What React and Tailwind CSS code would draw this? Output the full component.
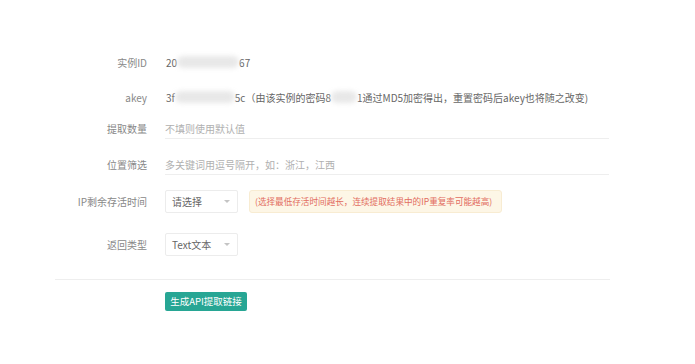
import React from "react";

const font = { fontFamily: '"Noto Sans CJK SC", "Noto Sans", sans-serif' };

function Blur({ w }) {
  return (
    <span
      className="inline-block h-[12px] bg-[#e8e8e8] rounded-[6px] blur-[2.5px] align-middle"
      style={{ width: w }}
    />
  );
}

function Label({ children }) {
  return (
    <div className="w-[147px] shrink-0 text-right text-[10px] text-[#888]">{children}</div>
  );
}

function Arrow() {
  return (
    <span className="w-0 h-0 border-l-[3px] border-r-[3px] border-t-[3px] border-l-transparent border-r-transparent border-t-[#c4c4c4]" />
  );
}

export default function App() {
  return (
    <div className="w-[695px] h-[364px] bg-white flex flex-col pt-[50px]" style={font}>
      <div className="flex items-center h-6">
        <Label>实例ID</Label>
        <div className="ml-[19px] flex items-center text-[10px] text-[#666]">
          <span>20</span>
          <Blur w={62} />
          <span>67</span>
        </div>
      </div>
      <div className="flex items-center h-6 mt-[11px]">
        <Label>akey</Label>
        <div className="ml-[19px] flex items-center text-[10px] text-[#666] whitespace-nowrap">
          <span>3f</span>
          <Blur w={60} />
          <span>5c（由该实例的密码8</span>
          <Blur w={26} />
          <span>1通过MD5加密得出，重置密码后akey也将随之改变)</span>
        </div>
      </div>
      <div className="flex items-center h-[21px] mt-[9px]">
        <Label>提取数量</Label>
        <div className="ml-[18px] w-[444px] h-full flex items-center border-b border-[#eeeeee] text-[10px] text-[#b0b0b0]">
          不填则使用默认值
        </div>
      </div>
      <div className="flex items-center h-[21px] mt-[15px]">
        <Label>位置筛选</Label>
        <div className="ml-[18px] w-[444px] h-full flex items-center border-b border-[#eeeeee] text-[10px] text-[#b0b0b0]">
          多关键词用逗号隔开，如：浙江，江西
        </div>
      </div>
      <div className="flex items-center h-[23px] mt-[15px]">
        <Label>IP剩余存活时间</Label>
        <div className="ml-[18px] w-[73px] h-full flex items-center justify-between pl-[6px] pr-[7px] border border-[#ececec] rounded-[2px] text-[10px] text-[#666]">
          <span>请选择</span>
          <Arrow />
        </div>
        <div className="ml-[11px] w-[253px] h-full flex items-center pl-[5px] bg-[#fdf6e6] border border-[#f8ecd2] rounded-[3px] text-[8.6px] text-[#e26d60] whitespace-nowrap">
          (选择最低存活时间越长，连续提取结果中的IP重复率可能越高)
        </div>
      </div>
      <div className="flex items-center h-[23px] mt-[20px]">
        <Label>返回类型</Label>
        <div className="ml-[18px] w-[73px] h-full flex items-center justify-between pl-[6px] pr-[7px] border border-[#ececec] rounded-[2px] text-[10px] text-[#666]">
          <span>Text文本</span>
          <Arrow />
        </div>
      </div>
      <div className="ml-[55px] w-[555px] h-px bg-[#eeeeee] mt-[23px]" />
      <div className="ml-[165px] mt-[12px] w-[82px] h-[19px] bg-[#27a694] rounded-[2px] flex items-center justify-center text-[9.5px] text-white">
        生成API提取链接
      </div>
    </div>
  );
}
